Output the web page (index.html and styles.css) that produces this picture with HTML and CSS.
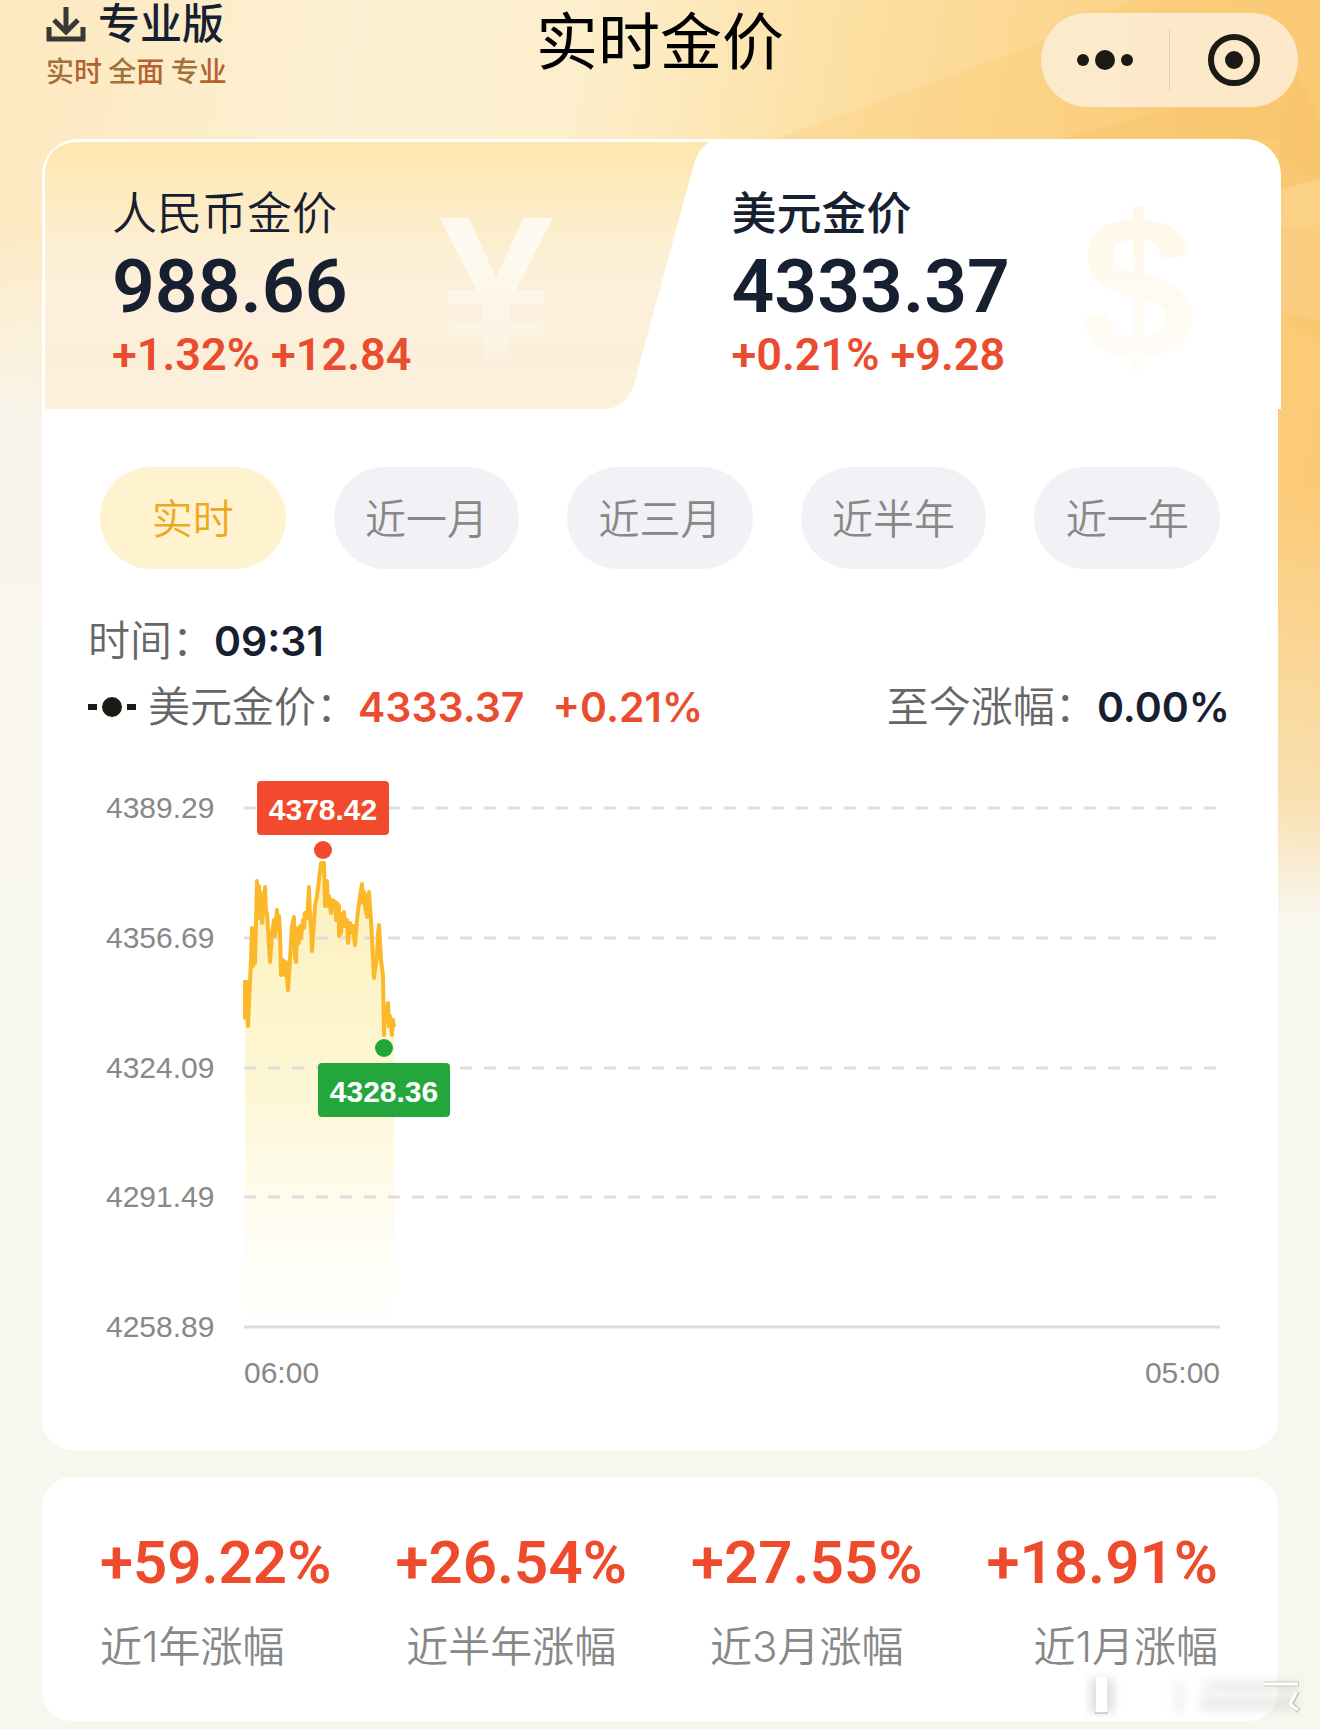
FILE: index.html
```
<!DOCTYPE html>
<html lang="zh-CN">
<head>
    <meta charset="UTF-8">
    <meta name="viewport" content="width=device-width, initial-scale=1.0">
    <title>实时金价</title>
    <link rel="stylesheet" href="styles.css">
</head>
<body>
    <svg class="backdrop" viewBox="0 0 1320 500" preserveAspectRatio="none" aria-hidden="true">
        <polygon points="775,139 1050,40 1130,0 1320,0 1320,180 1240,139" fill="#f8b84e" opacity="0.16"/>
        <polygon points="1060,139 1180,107 1295,70 1320,120 1320,180 1280,190 1280,139" fill="#f3b04a" opacity="0.14"/>
        <polygon points="1280,190 1320,178 1320,320 1280,312" fill="#fff" opacity="0.1"/>
        <polygon points="1280,225 1320,232 1320,340 1280,320" fill="#f0ac45" opacity="0.1"/>
    </svg>

    <header class="header">
        <a class="pro" href="#pro">
            <span class="pro-title">
                <svg class="pro-icon" viewBox="0 0 40 36" aria-hidden="true">
                    <path d="M20 1v25M8 14l12 12 12-12M3 21v12h34V21" fill="none" stroke="#3a3835" stroke-width="5"/>
                </svg>
                专业版
            </span>
            <span class="pro-sub"><i>实</i>时 <i>全</i>面 <i>专</i>业</span>
        </a>
        <h1 class="title">实时金价</h1>
        <div class="capsule">
            <button class="capsule-btn" aria-label="更多">
                <svg width="60" height="24" viewBox="0 0 60 24">
                    <circle cx="8" cy="12" r="6"/>
                    <circle cx="30" cy="12" r="10"/>
                    <circle cx="52" cy="12" r="6"/>
                </svg>
            </button>
            <button class="capsule-btn" aria-label="关闭">
                <svg width="52" height="52" viewBox="0 0 52 52">
                    <circle cx="26" cy="26" r="23" fill="none" stroke="#1c1a14" stroke-width="6"/>
                    <circle cx="26" cy="26" r="9"/>
                </svg>
            </button>
        </div>
    </header>

    <main class="main">
        <div class="tabs">
            <svg class="tabs-shape" viewBox="0 0 1239 270" preserveAspectRatio="none" aria-hidden="true">
                <defs>
                    <linearGradient id="tabFill" x1="0" y1="0" x2="0" y2="1">
                        <stop offset="0" stop-color="#fee7ae"/>
                        <stop offset="0.4" stop-color="#fcefd3"/>
                        <stop offset="0.6" stop-color="#fdefdb"/>
                        <stop offset="1" stop-color="#fcf0da"/>
                    </linearGradient>
                </defs>
                <path d="M3 270V38Q3 3 38 3H668Q656 8 650 32L594 238Q586 270 562 270Z" fill="url(#tabFill)"/>
            </svg>
            <button class="tab">
                <span class="tab-name">人民币金价</span>
                <span class="tab-price">988.66</span>
                <span class="tab-change">+1.32% +12.84</span>
                <span class="tab-sign tab-sign-cny" aria-hidden="true">¥</span>
            </button>
            <button class="tab tab-active">
                <span class="tab-name">美元金价</span>
                <span class="tab-price">4333.37</span>
                <span class="tab-change">+0.21% +9.28</span>
                <span class="tab-sign tab-sign-usd" aria-hidden="true">$</span>
            </button>
        </div>

        <section class="panel">
            <div class="ranges">
                <button class="range range-active">实时</button>
                <button class="range">近一月</button>
                <button class="range">近三月</button>
                <button class="range">近半年</button>
                <button class="range">近一年</button>
            </div>

            <div class="info">
                <div class="info-row">
                    <span>时间：</span><b>09:31</b>
                </div>
                <div class="info-row">
                    <svg class="legend" width="48" height="26" viewBox="0 0 48 26" aria-hidden="true">
                        <path d="M0 13h9M39 13h9" stroke="#1c1a14" stroke-width="6"/>
                        <circle cx="24" cy="13" r="10" fill="#1c1a14"/>
                    </svg>
                    <span>美元金价：</span><b class="up">4333.37</b><b class="up up-rate">+0.21%</b>
                    <span class="info-right">至今涨幅：</span><b>0.00%</b>
                </div>
            </div>

            <div class="chart">
                <div class="chart-y">
                    <span>4389.29</span>
                    <span>4356.69</span>
                    <span>4324.09</span>
                    <span>4291.49</span>
                    <span>4258.89</span>
                </div>
                <svg class="chart-plot" viewBox="0 -15 976 549">
                    <defs>
                        <linearGradient id="areaFill" gradientUnits="userSpaceOnUse" x1="0" y1="55" x2="0" y2="519">
                            <stop offset="0" stop-color="#fdf0bd"/>
                            <stop offset="0.5" stop-color="#fdf7d5"/>
                            <stop offset="1" stop-color="#fffef8" stop-opacity="0.3"/>
                        </linearGradient>
                    </defs>
                    <path fill="url(#areaFill)" d="M1 519L1 172 1 210 3 174 4 218 7 152 8 120 11 155 11 122 13 73 15 105 16 77 18 113 21 79 23 105 26 154 28 125 31 128 33 102 36 125 37 167 39 152 41 167 42 154 44 182 46 152 48 118 50 109 52 154 53 125 55 135 57 118 59 122 61 112 63 105 65 79 68 143 71 98 73 88 77 55 80 55 81 98 83 73 85 95 87 105 91 94 93 112 95 98 95 128 97 125 100 104 103 118 104 135 106 115 109 118 111 137 113 112 115 95 118 76 121 98 123 109 125 84 127 112 130 170 133 148 135 117 137 152 139 168 140 227 142 208 144 195 146 215 148 227 149 212 150 219L150 519Z"/>
                    <path class="grid" d="M0 0H976M0 130H976M0 260H976M0 389H976"/>
                    <path class="axis" d="M0 519H976"/>
                    <path class="line" d="M1 172L1 210 3 174 4 218 7 152 8 120 9 158 10 122 11 155 13 73 14 110 15 78 16 108 17 85 18 115 20 92 21 79 22 104 23 105 26 154 28 125 30 112 31 128 33 102 34 122 35 108 36 125 37 167 39 152 41 167 42 154 44 182 46 152 48 118 50 109 51 150 52 120 52 154 53 125 55 135 56 118 57 130 59 112 60 120 61 105 63 110 65 79 66 110 67 118 68 143 71 98 73 88 77 55 80 55 81 98 83 73 84 98 85 88 87 105 88 92 91 94 92 112 93 95 95 98 95 128 97 125 98 108 100 104 101 118 103 112 104 135 106 115 107 125 109 118 111 137 113 112 115 95 118 76 119 95 120 84 121 98 123 109 124 88 125 84 127 112 130 170 133 148 134 125 135 117 137 152 139 168 140 227 141 205 142 208 144 195 145 218 146 208 148 227 149 212 150 219"/>
                    <!-- high -->
                    <g>
                        <rect x="13" y="-27" width="132" height="54" rx="4" fill="#f24a2c"/>
                        <text class="mark" x="79" y="12">4378.42</text>
                        <circle cx="79" cy="42" r="9" fill="#f24a2c"/>
                    </g>
                    <!-- low -->
                    <g>
                        <circle cx="140" cy="240" r="9" fill="#23a73d"/>
                        <rect x="74" y="255" width="132" height="54" rx="4" fill="#23a73d"/>
                        <text class="mark" x="140" y="294">4328.36</text>
                    </g>
                </svg>
                <div class="chart-x">
                    <span>06:00</span>
                    <span>05:00</span>
                </div>
            </div>
        </section>

        <section class="stats">
            <div class="stat">
                <span class="stat-value">+59.22%</span>
                <span class="stat-label">近1年涨幅</span>
            </div>
            <div class="stat">
                <span class="stat-value">+26.54%</span>
                <span class="stat-label">近半年涨幅</span>
            </div>
            <div class="stat">
                <span class="stat-value">+27.55%</span>
                <span class="stat-label">近3月涨幅</span>
            </div>
            <div class="stat">
                <span class="stat-value">+18.91%</span>
                <span class="stat-label">近1月涨幅</span>
            </div>
        </section>
    </main>

    <!-- faded corner stamp -->
    <svg class="stamp" width="230" height="56" viewBox="0 0 230 56" aria-hidden="true">
        <defs>
            <filter id="soft" x="-20%" y="-20%" width="140%" height="140%">
                <feGaussianBlur stdDeviation="4"/>
            </filter>
        </defs>
        <g filter="url(#soft)" fill="#8c8c80">
            <rect x="6" y="12" width="24" height="34" opacity="0.28"/>
            <rect x="90" y="16" width="10" height="30" opacity="0.12"/>
            <rect x="116" y="12" width="98" height="34" opacity="0.08"/>
            <rect x="130" y="16" width="84" height="5" opacity="0.14"/>
            <rect x="116" y="34" width="96" height="6" opacity="0.14"/>
        </g>
        <rect x="12" y="10" width="11" height="36" fill="#fff"/>
        <path d="M11 46h13" stroke="#aaa" stroke-width="1"/>
        <path d="M180 17h35M213 25c-2 8-8 10-4 14l6 5" fill="none" stroke="#c8c8c0" stroke-width="5"/>
        <path d="M180 17h34M212 25c-2 8-8 10-4 14l6 4" fill="none" stroke="#fff" stroke-width="3"/>
    </svg>
</body>
</html>
```
FILE: styles.css
```
* {
    box-sizing: border-box;
}
body {
    position: relative;
    min-height: 100vh;
    margin: 0;
    font-family: Inter, "Noto Sans CJK SC", sans-serif;
    color: #172030;
    background-color: #f8f7ef;
    background-repeat: no-repeat;
    background-image:
        linear-gradient(to bottom, rgba(248, 247, 239, 0) 480px, rgba(248, 247, 239, 0.5) 800px, #f8f7ef 920px),
        radial-gradient(ellipse 300px 480px at 0 700px, #f9f5ea 60%, rgba(249, 245, 234, 0) 100%),
        linear-gradient(100deg, #fde8bf 0%, #fcf0d2 22%, #fdefcd 36%, #fde0a4 52%, #fbcf80 75%, #fbc468 100%);
}
button {
    margin: 0;
    padding: 0;
    border: none;
    background: none;
    font-family: inherit;
    color: inherit;
    cursor: pointer;
}
.backdrop {
    position: absolute;
    top: 0;
    left: 0;
    width: 100%;
    height: 500px;
}
.header {
    position: relative;
    display: grid;
    grid-template-columns: 1fr auto 1fr;
    align-items: start;
    height: 139px;
    padding: 0 22px;
}
.pro {
    display: flex;
    flex-direction: column;
    padding-left: 24px;
    color: #172030;
    text-decoration: none;
}
.pro-title {
    display: flex;
    align-items: center;
    gap: 12px;
    font-size: 42px;
    font-weight: 500;
    line-height: 48px;
}
.pro-icon {
    width: 40px;
    height: 36px;
}
.pro-sub {
    font-family: "Noto Sans CJK SC", sans-serif;
    font-size: 28px;
    font-weight: 500;
    line-height: 44px;
    color: #b4622f;
}
.pro-sub i {
    font-style: normal;
    color: #a2703a;
}
.title {
    margin: 0;
    font-size: 62px;
    font-weight: 400;
    line-height: 86px;
    color: #000;
}
.capsule {
    display: flex;
    justify-self: end;
    align-items: center;
    width: 257px;
    height: 94px;
    margin-top: 13px;
    border-radius: 47px;
    background: rgba(253, 240, 222, 0.8);
}
.capsule-btn {
    display: flex;
    flex: 1;
    align-items: center;
    justify-content: center;
    height: 60px;
    fill: #1c1a14;
}
.capsule-btn + .capsule-btn {
    border-left: 1px solid #e3cfae;
}
.main {
    position: relative;
    padding: 0 42px 7px;
}
.tabs {
    position: relative;
    display: grid;
    grid-template-columns: 1fr 1fr;
    height: 270px;
    margin-right: -3px;
    border-radius: 36px 36px 0 0;
    background: #fff;
}
.tabs-shape {
    position: absolute;
    width: 100%;
    height: 100%;
}
.tab {
    position: relative;
    display: flex;
    flex-direction: column;
    align-items: flex-start;
    padding: 44px 70px 0;
    text-align: left;
}
.tab-name {
    font-size: 45px;
    font-weight: 350;
    line-height: 62px;
}
.tab-active .tab-name {
    font-weight: 500;
}
.tab-price {
    font-family: Roboto, sans-serif;
    font-size: 75px;
    font-weight: 600;
    line-height: 82px;
}
.tab-change {
    font-family: Roboto, sans-serif;
    font-size: 45px;
    font-weight: 600;
    line-height: 56px;
    color: #ea4c2f;
}
.tab-sign {
    position: absolute;
    top: 30px;
    font-family: "Liberation Sans", sans-serif;
    font-size: 206px;
    font-weight: 700;
    line-height: 240px;
    color: transparent;
    background-clip: text;
    -webkit-background-clip: text;
}
.tab-sign-cny {
    right: 108px;
    background-image: linear-gradient(to bottom, rgba(255, 255, 255, 0.7) 30%, rgba(255, 255, 255, 0.1) 85%);
}
.tab-sign-usd {
    right: 86px;
    background-image: linear-gradient(to bottom, #fff8e8 20%, #fffdf9 85%);
}
.panel {
    padding: 58px;
    border-radius: 0 0 30px 30px;
    background: #fff;
}
.ranges {
    display: grid;
    grid-template-columns: repeat(5, 1fr);
    gap: 48px;
}
.range {
    height: 102px;
    padding-bottom: 4px;
    border-radius: 51px;
    background: #f2f1f6;
    font-size: 41px;
    font-weight: 350;
    color: #888;
}
.range-active {
    background: #fef2cf;
    color: #eda81f;
}
.info {
    margin: 39px -10px 0 -12px;
    font-size: 42px;
    line-height: 66px;
    color: #666;
}
.info-row {
    display: flex;
    align-items: center;
}
.info-row span {
    font-weight: 350;
}
.info-row b {
    font-size: 41px;
    font-weight: 600;
    color: #172030;
}
.info-row .up {
    color: #ea4c2f;
}
.info-row .up-rate {
    margin-left: 28px;
}
.legend {
    margin-right: 12px;
}
.info-right {
    margin-left: auto;
}
.chart {
    display: grid;
    grid-template-columns: 108px 1fr;
    column-gap: 30px;
    margin: 53px 0 0 6px;
    font-family: "Liberation Sans", sans-serif;
    font-size: 30px;
    line-height: 30px;
    color: #888;
}
.chart-y {
    display: flex;
    flex-direction: column;
    justify-content: space-between;
}
.chart-plot {
    width: 100%;
    overflow: visible;
}
.chart-x {
    display: flex;
    grid-column: 2;
    justify-content: space-between;
    padding: 16px 0 4px;
}
.grid {
    fill: none;
    stroke: #dedede;
    stroke-width: 3;
    stroke-dasharray: 12 12;
}
.axis {
    stroke: #dcdcdf;
    stroke-width: 3;
}
.line {
    fill: none;
    stroke: #fbb829;
    stroke-width: 4;
    stroke-linejoin: round;
}
.mark {
    fill: #fff;
    font-weight: 700;
    text-anchor: middle;
}
.stats {
    display: flex;
    justify-content: space-between;
    margin-top: 27px;
    padding: 50px 60px 44px 58px;
    border-radius: 30px;
    background: #fff;
}
.stat {
    display: flex;
    flex-direction: column;
    align-items: center;
}
.stat:first-child {
    align-items: flex-start;
}
.stat:last-child {
    align-items: flex-end;
}
.stat-value {
    font-family: Roboto, sans-serif;
    font-size: 60px;
    font-weight: 600;
    line-height: 72px;
    color: #ee4b2d;
}
.stat-label {
    margin-top: 18px;
    font-size: 42px;
    font-weight: 350;
    line-height: 60px;
    color: #888;
}
.stamp {
    position: absolute;
    right: 6px;
    bottom: 6px;
}
```
